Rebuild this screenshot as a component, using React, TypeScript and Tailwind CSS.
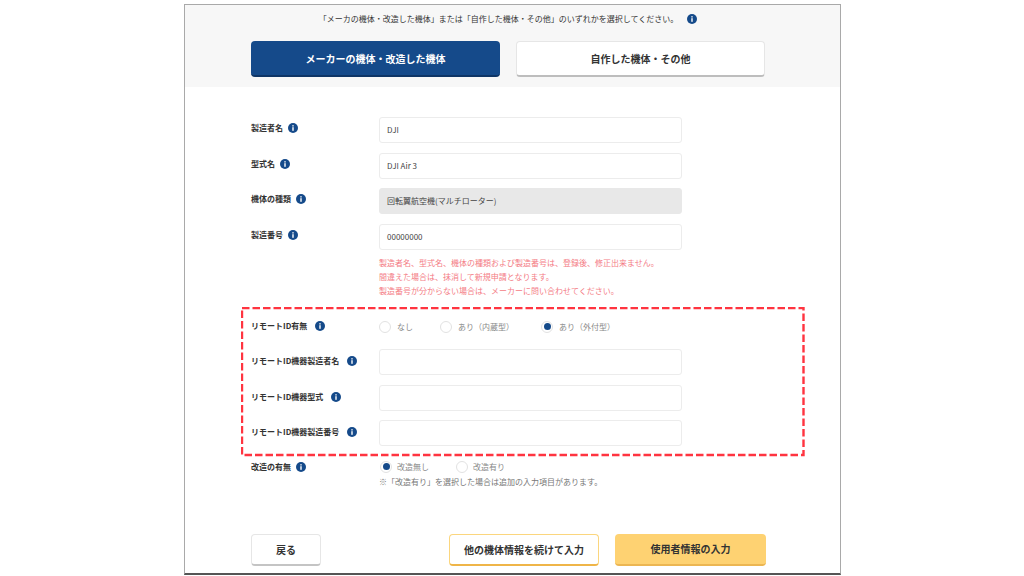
const fontStack = { fontFamily: '"Noto Sans CJK JP", "Noto Sans", sans-serif' };

function InfoIcon({ className = "" }: { className?: string }) {
  return (
    <svg viewBox="0 0 10 10" className={`h-[10px] w-[10px] shrink-0 ${className}`}>
      <circle cx="5" cy="5" r="5" fill="#154a8a" />
      <rect x="4.3" y="4.2" width="1.4" height="3.6" fill="#fff" />
      <rect x="4.3" y="2.2" width="1.4" height="1.3" fill="#fff" />
    </svg>
  );
}

function Label({ text, gap = "ml-[5px]", lift = "pb-[1px]" }: { text: string; gap?: string; lift?: string }) {
  return (
    <div className={`flex w-[128px] shrink-0 items-center ${lift}`}>
      <span className="text-[8px] leading-none font-semibold whitespace-nowrap text-[#333]">{text}</span>
      <InfoIcon className={gap} />
    </div>
  );
}

function FieldRow({
  label,
  value = "",
  disabled = false,
  gap,
  lift,
  className = "",
}: {
  label: string;
  value?: string;
  disabled?: boolean;
  gap?: string;
  lift?: string;
  className?: string;
}) {
  return (
    <div className={`flex h-[26px] ${className}`}>
      <Label text={label} gap={gap} lift={lift} />
      <div
        className={`flex w-[303px] items-center rounded-[3px] border px-[7px] pb-[1px] text-[8px] text-[#444] ${
          disabled ? "border-[#e8e8e8] bg-[#e8e8e8]" : "border-[#ececec] bg-white"
        }`}
      >
        {value}
      </div>
    </div>
  );
}

function Radio({
  text,
  checked = false,
  width,
  textGap = "ml-[6px]",
}: {
  text: string;
  checked?: boolean;
  width: string;
  textGap?: string;
}) {
  return (
    <div className={`flex items-center ${width}`}>
      <span className="flex h-[12px] w-[12px] items-center justify-center rounded-full border border-[#e2e2e2] bg-white">
        {checked && <span className="h-[7px] w-[7px] rounded-full bg-[#154a8a]" />}
      </span>
      <span className={`text-[8px] leading-none whitespace-nowrap text-[#888] ${textGap}`}>{text}</span>
    </div>
  );
}

export default function App() {
  return (
    <div className="relative h-[576px] w-[1024px] overflow-hidden bg-white" style={fontStack}>
      <div className="mt-[4px] ml-[184px] h-[571px] w-[657px] border border-b-2 border-[#a9a9a9] border-b-[#555] bg-white">
        <div className="h-[82px] bg-[#f7f7f7] pt-[9px]">
          <div className="flex h-[10px] items-center justify-center pr-[9px]">
            <span className="text-[8px] leading-none whitespace-nowrap text-[#333]">
              「メーカの機体・改造した機体」または「自作した機体・その他」のいずれかを選択してください。
            </span>
            <InfoIcon className="ml-[9px]" />
          </div>
          <div className="mt-[17px] flex gap-[16px] pl-[66px]">
            <button className="h-[36px] w-[249px] rounded-[4px] border-b-2 border-[#0e3566] bg-[#154a8a] text-[10px] font-bold text-white">
              メーカーの機体・改造した機体
            </button>
            <button className="h-[36px] w-[249px] rounded-[4px] border border-b-2 border-[#e6e6e6] border-b-[#bdbdbd] bg-white text-[10px] font-bold text-[#333]">
              自作した機体・その他
            </button>
          </div>
        </div>

        <div className="pl-[66px]">
          <FieldRow label="製造者名" value="DJI" lift="pb-[4px]" className="mt-[30px]" />
          <FieldRow label="型式名" value="DJI Air 3" lift="pb-[4px]" className="mt-[10px]" />
          <FieldRow label="機体の種類" value="回転翼航空機(マルチローター)" lift="pb-[4px]" disabled className="mt-[9px]" />
          <FieldRow label="製造番号" value="00000000" lift="pb-[4px]" className="mt-[10px]" />

          <div className="mt-[6px] ml-[128px] text-[8px] leading-[14.2px] whitespace-nowrap text-[#f47c85]">
            <p>製造者名、型式名、機体の種類および製造番号は、登録後、修正出来ません。</p>
            <p>間違えた場合は、抹消して新規申請となります。</p>
            <p>製造番号が分からない場合は、メーカーに問い合わせてください。</p>
          </div>

          <div className="mt-[21px] flex h-[14px]">
            <Label text="リモートID有無" gap="ml-[8px]" />
            <div className="flex items-center">
              <Radio text="なし" width="w-[61px]" />
              <Radio text="あり（内蔵型）" width="w-[101px]" />
              <Radio text="あり（外付型）" checked width="w-auto" />
            </div>
          </div>
          <FieldRow label="リモートID機器製造者名" gap="ml-[8px]" className="mt-[15px]" />
          <FieldRow label="リモートID機器型式" gap="ml-[8px]" className="mt-[10px]" />
          <FieldRow label="リモートID機器製造番号" gap="ml-[8px]" className="mt-[9px]" />

          <div className="mt-[15px] flex h-[12px]">
            <Label text="改造の有無" lift="pb-0" />
            <div className="ml-[1px] flex items-center">
              <Radio text="改造無し" checked width="w-[76px]" textGap="ml-[5px]" />
              <Radio text="改造有り" width="w-auto" textGap="ml-[5px]" />
            </div>
          </div>
          <p className="mt-[3px] ml-[128px] text-[8px] leading-[12px] whitespace-nowrap text-[#777]">
            ※「改造有り」を選択した場合は追加の入力項目があります。
          </p>

          <div className="mt-[46px] flex">
            <button className="h-[32px] w-[70px] rounded-[4px] border border-b-2 border-[#e6e6e6] border-b-[#c4c4c4] bg-white text-[10px] font-bold text-[#333]">
              戻る
            </button>
            <button className="ml-[128px] h-[32px] w-[150px] rounded-[4px] border border-b-2 border-[#fbd67e] border-b-[#efb548] bg-white text-[10px] font-bold whitespace-nowrap text-[#333]">
              他の機体情報を続けて入力
            </button>
            <button className="ml-[16px] h-[32px] w-[151px] rounded-[4px] border-b-2 border-[#ecb652] bg-[#fed272] text-[10px] font-bold text-[#333]">
              使用者情報の入力
            </button>
          </div>
        </div>
      </div>

      {/* red dashed annotation over the remote ID rows */}
      <svg className="absolute top-[307px] left-[241px] h-[150px] w-[565px]" viewBox="0 0 565 150" fill="none">
        <rect x="1" y="1" width="561.5" height="147" stroke="#ff3440" strokeWidth="2.4" strokeDasharray="7.5 3" />
      </svg>
    </div>
  );
}
